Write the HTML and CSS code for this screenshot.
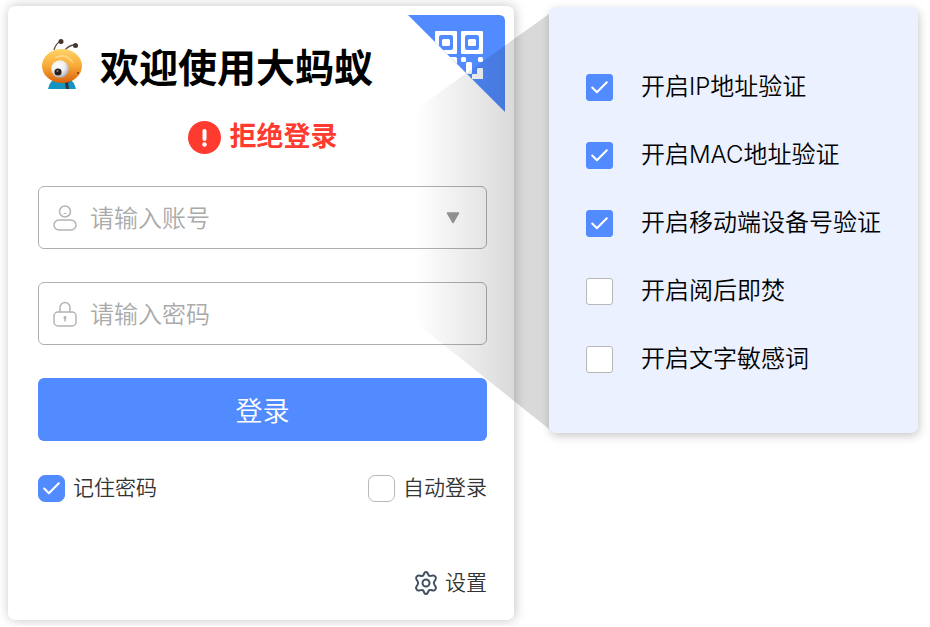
FILE: index.html
```
<!DOCTYPE html>
<html lang="zh-CN">
<head>
  <meta charset="UTF-8"/>
  <meta name="viewport" content="width=device-width,initial-scale=1"/>
  <title>欢迎使用大蚂蚁</title>
  <link rel="stylesheet" href="styles.css">
</head>
<body>

  <main class="login-card">
    <button class="qr-corner" type="button" aria-label="QR">
      <svg viewBox="0 0 97 97" aria-hidden="true">
        <path d="M0 0H91Q97 0 97 6V97Z" fill="#528bff"/>
        <g clip-path="url(#corner)">
          <path fill="#fff" fill-rule="evenodd" d="M28 16h20q1 0 1 1v21q0 1-1 1H28q-1 0-1-1V17q0-1 1-1zM33 20q-2 0-2 2v11q0 2 2 2h10q2 0 2-2V22q0-2-2-2z"/>
          <path fill="#fff" fill-rule="evenodd" d="M54 16h20q1 0 1 1v21q0 1-1 1H54q-1 0-1-1V17q0-1 1-1zM59 20q-2 0-2 2v11q0 2 2 2h10q2 0 2-2V22q0-2-2-2z"/>
          <rect x="34" y="24" width="8" height="7" rx="1.5" fill="#fff"/>
          <rect x="60" y="24" width="8" height="7" rx="1.5" fill="#fff"/>
          <rect x="27" y="42" width="22" height="22" rx="1.5" fill="#fff"/>
          <rect x="53" y="42" width="5" height="5" rx="1.5" fill="#fff"/>
          <rect x="70" y="42" width="5" height="5" rx="1.5" fill="#fff"/>
          <rect x="58" y="47" width="6" height="12" rx="1.5" fill="#fff"/>
          <path fill="#fff" d="M71 53h3q1 0 1 1v10H64v-4q0-1 1-1h4v-5q0-1 2-1z"/>
        </g>
        <clipPath id="corner"><path d="M0 0H97V97Z"/></clipPath>
      </svg>
    </button>

    <header class="brand">
      <svg class="brand-logo" viewBox="0 0 42 52" aria-hidden="true">
        <defs>
          <linearGradient id="head" x1="0" y1="0" x2="0" y2="1">
            <stop offset="0" stop-color="#ffd467"/>
            <stop offset=".5" stop-color="#f8aa37"/>
            <stop offset="1" stop-color="#d9610d"/>
          </linearGradient>
          <radialGradient id="eye" cx=".4" cy=".35" r=".65">
            <stop offset="0" stop-color="#fff"/>
            <stop offset=".6" stop-color="#eee"/>
            <stop offset="1" stop-color="#a9adb5"/>
          </radialGradient>
        </defs>
        <path d="M13 12Q15 5 20 3M24 12Q28 7 34 7" fill="none" stroke="#5a4a40" stroke-width="1.3"/>
        <circle cx="20" cy="3.500" r="2.500" fill="#46342b"/>
        <circle cx="34.500" cy="7.500" r="2.500" fill="#46342b"/>
        <path d="M7 51Q9 42 15 41H28Q33 43 35 51Z" fill="#1594c2"/>
        <path d="M15 41L25 43 33 41 27 45 28 51H25L24 45Z" fill="#34313a"/>
        <ellipse cx="21" cy="28" rx="20" ry="17" fill="url(#head)"/>
        <path d="M14 20Q25 14 32 25" fill="none" stroke="#ffe19c" stroke-width="1.500" opacity=".7"/>
        <circle cx="19" cy="31" r="8.800" fill="url(#eye)"/>
        <circle cx="17" cy="34" r="3.600" fill="#2c201c"/>
        <circle cx="16.500" cy="33" r="1" fill="#97837a"/>
        <circle cx="37" cy="35" r="1" fill="#7a3009"/>
      </svg>
      <h1>欢迎使用大蚂蚁</h1>
    </header>

    <p class="error" role="alert">
      <svg class="error-icon" viewBox="0 0 33 33" aria-hidden="true">
        <circle cx="16.500" cy="16.500" r="16.500" fill="#ff3b30"/>
        <path d="M16.500 10v8" stroke="#fff" stroke-width="4" stroke-linecap="round"/>
        <circle cx="16.500" cy="23.500" r="2.200" fill="#fff"/>
      </svg>
      <span>拒绝登录</span>
    </p>

    <form class="login-form" onsubmit="event.preventDefault();">
      <div class="field">
        <svg class="field-icon" viewBox="0 0 24 26" aria-hidden="true">
          <circle cx="12" cy="6.500" r="5.500"/>
          <path d="M11 8.500h2" stroke-width="1"/>
          <rect x="1" y="15" width="22" height="10" rx="5"/>
        </svg>
        <input type="text" placeholder="请输入账号" aria-label="账号"/>
        <button class="drop" type="button" aria-label="选择账号">
          <svg viewBox="0 0 14 12" aria-hidden="true">
            <path d="M1.500 1h11L7 10.500Z" fill="#999" stroke="#999" stroke-width="1.500" stroke-linejoin="round"/>
          </svg>
        </button>
      </div>
      <div class="field">
        <svg class="field-icon" viewBox="0 0 24 26" aria-hidden="true">
          <path d="M7 11V6.500a5 5 0 0 1 10 0V11"/>
          <rect x="1" y="11" width="22" height="14" rx="4"/>
          <path d="M12 17v3" stroke-width="1.500"/>
          <circle cx="12" cy="16.500" r=".8" stroke-width="1.500"/>
        </svg>
        <input type="password" placeholder="请输入密码" aria-label="密码"/>
      </div>
      <button class="submit" type="submit">登录</button>
      <div class="options">
        <label class="option"><input class="check round" type="checkbox" checked/><span>记住密码</span></label>
        <label class="option"><input class="check round" type="checkbox"/><span>自动登录</span></label>
      </div>
    </form>

    <button class="settings" type="button">
      <svg viewBox="0 0 24 24" aria-hidden="true">
        <path d="M9.800 3.400Q10.500 1 12 1T14.200 3.400Q14.800 5.400 16.800 4.900L19 4.400Q20.500 4.200 21.500 5.800T21.500 8.700L20.400 10.200Q19.200 12 20.400 13.800L21.500 15.300Q22.500 16.600 21.500 18.200T19 19.600L16.800 19.100Q14.800 18.600 14.200 20.600Q13.500 23 12 23T9.800 20.600Q9.200 18.600 7.200 19.100L5 19.600Q3.500 19.800 2.500 18.200T2.500 15.300L3.600 13.800Q4.800 12 3.600 10.200L2.500 8.700Q1.500 7.400 2.500 5.800T5 4.400L7.200 4.900Q9.200 5.400 9.800 3.400Z"/>
        <circle cx="12" cy="12" r="3.500"/>
      </svg>
      <span>设置</span>
    </button>
  </main>

  <aside class="policy">
    <div class="beam"></div>
    <label class="policy-row"><input class="check" type="checkbox" checked/><span>开启IP地址验证</span></label>
    <label class="policy-row"><input class="check" type="checkbox" checked/><span>开启MAC地址验证</span></label>
    <label class="policy-row"><input class="check" type="checkbox" checked/><span>开启移动端设备号验证</span></label>
    <label class="policy-row"><input class="check" type="checkbox"/><span>开启阅后即焚</span></label>
    <label class="policy-row"><input class="check" type="checkbox"/><span>开启文字敏感词</span></label>
  </aside>

</body>
</html>
```
FILE: styles.css
```
* {
  box-sizing: border-box;
}

body {
  margin: 0;
  padding: 6px 12px 6px 8px;
  display: grid;
  grid-template-columns: minmax(0, 506fr) minmax(0, 369fr);
  gap: 35px;
  align-items: start;
  background: #fff;
  color: #333;
  font-family: Inter, "Noto Sans CJK SC", sans-serif;
  font-weight: 350;
}

button,
input {
  font: inherit;
  color: inherit;
}

button {
  padding: 0;
  border: none;
  background: none;
  cursor: pointer;
}

svg {
  display: block;
}

.login-card {
  position: relative;
  padding: 32px 27px 22px 30px;
  border-radius: 7px;
  background: #fff;
  box-shadow: 1px 0 12px rgba(0, 0, 0, 0.24);
}

/* QR switch in the corner of the card */
.qr-corner {
  position: absolute;
  top: 9px;
  right: 9px;
  width: 97px;
  height: 97px;
}

.brand {
  display: flex;
  align-items: center;
  gap: 17px;
  height: 60px;
  padding-left: 3px;
}

.brand-logo {
  width: 42px;
  height: 52px;
  margin-bottom: 8px;
}

h1 {
  margin: 0;
  color: #000;
  font-size: 39px;
  line-height: 60px;
  font-weight: 700;
}

.error {
  display: flex;
  justify-content: center;
  align-items: center;
  gap: 9px;
  height: 40px;
  margin: 19px 0 29px;
  color: #ff3b30;
  font-size: 27px;
  line-height: 40px;
  font-weight: 700;
}

.error-icon {
  width: 33px;
  height: 33px;
}

.login-form {
  display: grid;
  grid-template-columns: minmax(0, 1fr);
  gap: 33px;
}

.field {
  display: flex;
  align-items: center;
  gap: 13px;
  height: 63px;
  padding: 0 26px 0 14px;
  border: 1px solid #b0b0b0;
  border-radius: 6px;
}

.field-icon {
  flex: none;
  width: 24px;
  height: 26px;
  fill: none;
  stroke: #b4b4b4;
  stroke-width: 1.5;
  stroke-linecap: round;
}

.field input {
  flex: 1;
  min-width: 0;
  height: 100%;
  padding: 2px 0 0;
  border: none;
  outline: none;
  background: none;
  font-size: 24px;
}

.field input::placeholder {
  color: #aaa;
}

.drop {
  width: 14px;
}

.submit {
  height: 63px;
  border-radius: 6px;
  background: #528bff;
  color: #fff;
  font-size: 27px;
}

.options {
  display: flex;
  justify-content: space-between;
}

.option {
  display: flex;
  align-items: center;
  gap: 8px;
  height: 28px;
  font-size: 21px;
  line-height: 28px;
}

.check {
  appearance: none;
  flex: none;
  width: 27px;
  height: 27px;
  margin: 0;
  border: 1px solid #b8b8b8;
  border-radius: 3px;
  background: #fff;
}

.check.round {
  border-radius: 7px;
}

.check:checked {
  border-color: #528bff;
  background: #528bff url("data:image/svg+xml,%3Csvg xmlns='http://www.w3.org/2000/svg' viewBox='0 0 24 24'%3E%3Cpath d='M5 12l4.500 4.500L19 7' fill='none' stroke='white' stroke-width='2' stroke-linecap='round' stroke-linejoin='round'/%3E%3C/svg%3E") center / 25px no-repeat;
}

.settings {
  display: flex;
  align-items: center;
  gap: 7px;
  height: 30px;
  margin: 66px 0 0 auto;
  font-size: 21px;
  line-height: 28px;
}

.settings svg {
  width: 24px;
  height: 24px;
  fill: none;
  stroke: #405062;
  stroke-width: 2;
}

.policy {
  position: relative;
  margin-top: 1px;
  padding: 46px 20px 40px 37px;
  border-radius: 7px;
  background: #ebf1ff;
  color: #000;
  box-shadow: 1px 3px 10px rgba(0, 0, 0, 0.22);
}

.policy-row {
  display: flex;
  align-items: center;
  gap: 28px;
  height: 68px;
  font-size: 24px;
  line-height: 32px;
}

/* shade that opens from the card towards the panel */
.beam {
  position: absolute;
  top: 7px;
  right: 100%;
  width: 134px;
  height: 415px;
  background: linear-gradient(to right, rgba(0, 0, 0, 0), rgba(0, 0, 0, 0.15) 75%);
  clip-path: polygon(0 96px, 100% 0, 100% 100%, 0 308px);
  pointer-events: none;
}
```
